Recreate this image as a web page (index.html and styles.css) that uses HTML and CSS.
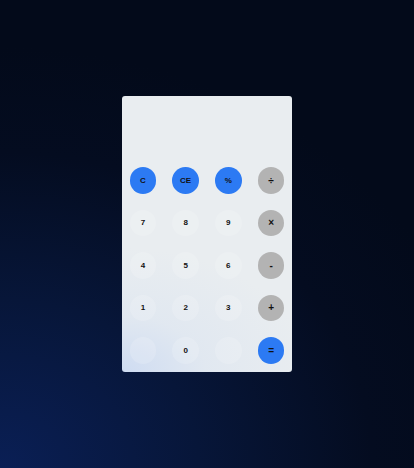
FILE: index.html
```html
<!DOCTYPE html>
<html lang="en">
<head>
<meta charset="utf-8">
<title>Calculator</title>
<link rel="stylesheet" href="styles.css">
</head>
<body>
<div class="calc">
  <div class="display"></div>
  <div class="keys">
    <button class="key blue">C</button>
    <button class="key blue">CE</button>
    <button class="key blue">%</button>
    <button class="key op">÷</button>
    <button class="key num">7</button>
    <button class="key num">8</button>
    <button class="key num">9</button>
    <button class="key op">×</button>
    <button class="key num">4</button>
    <button class="key num">5</button>
    <button class="key num">6</button>
    <button class="key op">-</button>
    <button class="key num">1</button>
    <button class="key num">2</button>
    <button class="key num">3</button>
    <button class="key op">+</button>
    <button class="key num"></button>
    <button class="key num">0</button>
    <button class="key num"></button>
    <button class="key blue eq">=</button>
  </div>
</div>
</body>
</html>
```
FILE: styles.css
```css
html, body {
  margin: 0;
  height: 100%;
}
body {
  background: radial-gradient(ellipse 120% 90% at 0% 100%, #0a1f55 0%, #071639 40%, #040c20 75%, #030a1a 100%);
  display: flex;
  align-items: center;
  justify-content: center;
  font-family: "Liberation Sans", Arial, sans-serif;
}
.calc {
  width: 170px;
  height: 276px;
  box-sizing: border-box;
  padding: 8px 7.6px 8.3px;
  border-radius: 3px;
  background:
    radial-gradient(ellipse 110% 45% at 0% 100%, rgba(205, 219, 242, 0.95) 0%, rgba(220, 229, 241, 0.6) 45%, rgba(233, 237, 240, 0) 100%),
    #e9edf0;
  display: flex;
  flex-direction: column;
}
.display {
  flex: 1;
}
.keys {
  display: grid;
  grid-template-columns: repeat(4, 26.7px);
  grid-auto-rows: 26.7px;
  justify-content: space-between;
  row-gap: 15.8px;
}
.key {
  border: none;
  border-radius: 50%;
  padding: 0;
  margin: 0;
  font-family: inherit;
  font-size: 8px;
  font-weight: bold;
  color: #111;
  display: flex;
  align-items: center;
  justify-content: center;
}
.blue {
  background: #2c7af3;
}
.op {
  background: #b3b3b3;
  font-size: 10px;
}
.eq {
  font-size: 10px;
}
.num {
  background: rgba(255, 255, 255, 0.16);
}
```
